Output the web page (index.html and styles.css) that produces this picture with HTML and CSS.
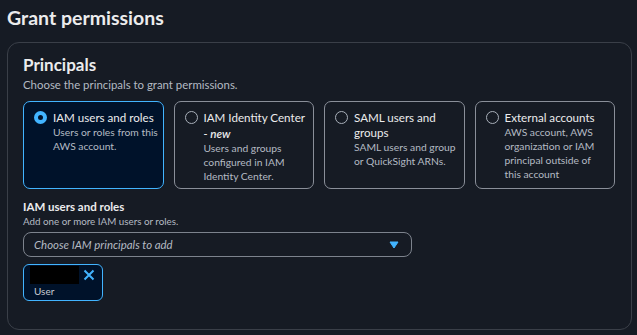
FILE: index.html
```html
<!DOCTYPE html>
<html lang="en">
  <head>
    <meta charset="UTF-8" />
    <meta name="viewport" content="width=device-width, initial-scale=1.0" />
    <title>Grant permissions</title>
    <link rel="stylesheet" href="styles.css">
  </head>
  <body>
    <h1 class="page-title">Grant permissions</h1>
    <div class="container">
      <h2>Principals</h2>
      <p class="hint">Choose the principals to grant permissions.</p>

      <div class="tiles">
        <div class="tile selected">
          <span class="radio"></span>
          <div class="tile-text">
            <div class="tile-title">IAM users and roles</div>
            <div class="tile-desc">Users or roles from this AWS account.</div>
          </div>
        </div>
        <div class="tile">
          <span class="radio"></span>
          <div class="tile-text">
            <div class="tile-title">IAM Identity Center <em>- new</em></div>
            <div class="tile-desc">Users and groups configured in IAM Identity Center.</div>
          </div>
        </div>
        <div class="tile">
          <span class="radio"></span>
          <div class="tile-text">
            <div class="tile-title">SAML users and groups</div>
            <div class="tile-desc">SAML users and group or QuickSight ARNs.</div>
          </div>
        </div>
        <div class="tile">
          <span class="radio"></span>
          <div class="tile-text">
            <div class="tile-title">External accounts</div>
            <div class="tile-desc">AWS account, AWS organization or IAM principal outside of<br />this account</div>
          </div>
        </div>
      </div>

      <div class="field">
        <div class="field-label">IAM users and roles</div>
        <div class="field-desc">Add one or more IAM users or roles.</div>
        <div class="select">
          <span class="placeholder">Choose IAM principals to add</span>
          <svg class="caret" width="10" height="8" viewBox="0 0 10 8">
            <path d="M1 1h8L5 7z" fill="#42b4ff" stroke="#42b4ff" stroke-width="1" stroke-linejoin="round" />
          </svg>
        </div>
        <div class="token">
          <div class="token-top">
            <span class="redacted"></span>
            <svg class="dismiss" width="12" height="12" viewBox="0 0 12 12">
              <path d="M1.5 1.5l9 9M10.5 1.5l-9 9" stroke="#42b4ff" stroke-width="2" />
            </svg>
          </div>
          <div class="token-sub">User</div>
        </div>
      </div>
    </div>
  </body>
</html>
```

FILE: styles.css
```css
/* Reset some default styles */
body,
h1,
h2,
p {
  margin: 0;
  padding: 0;
}

body {
  font-family: Lato, "Open Sans", sans-serif;
  background-color: #161b24;
  color: #e9ebed;
  padding: 6px 5px 5px 7px;
  height: 335px;
  box-sizing: border-box;
}

.page-title {
  font-size: 19.5px;
  font-weight: 700;
  line-height: 24px;
  color: #ececed;
}

.container {
  margin-top: 12px;
  border: 1px solid #3a3f48;
  border-radius: 12px;
  padding: 12px 16px 16px 15px;
  height: 288px;
  box-sizing: border-box;
}

h2 {
  font-size: 17px;
  font-weight: 700;
  line-height: 20px;
  color: #ececed;
}

.hint {
  font-size: 11.4px;
  line-height: 16px;
  margin-top: 2px;
  color: #b4bac3;
}

/* Tiles for choosing principals */
.tiles {
  display: grid;
  grid-template-columns: repeat(4, 1fr);
  gap: 10px;
  margin-top: 8px;
}

.tile {
  display: flex;
  gap: 6px;
  height: 88px;
  box-sizing: border-box;
  padding: 8px 2px 8px 10px;
  border: 1.5px solid #8a8f99;
  border-radius: 7px;
}

.tile.selected {
  border-color: #42b4ff;
  background-color: #00122a;
}

.tile-text {
  flex: 1;
  min-width: 0;
}

.radio {
  flex: none;
  width: 13px;
  height: 13px;
  box-sizing: border-box;
  margin-top: 1px;
  border: 1.5px solid #a9b0ba;
  border-radius: 50%;
}

.tile.selected .radio {
  border: 4px solid #42b4ff;
  background-color: #00122a;
}

.tile-title {
  font-size: 11.6px;
  line-height: 15px;
  color: #ececed;
}

.tile-title em {
  display: block;
  font-weight: 600;
  margin-top: 1px;
}

.tile-desc {
  font-size: 10.3px;
  line-height: 14px;
  color: #b4bac3;
}

/* Principal picker */
.field {
  margin-top: 10px;
}

.field-label {
  font-size: 11.5px;
  font-weight: 700;
  line-height: 16px;
  color: #ececed;
}

.field-desc {
  font-size: 9.8px;
  line-height: 13px;
  color: #b4bac3;
}

.select {
  display: flex;
  align-items: center;
  justify-content: space-between;
  width: 389px;
  height: 25px;
  box-sizing: border-box;
  margin-top: 4px;
  padding: 0 12px 0 10px;
  border: 1.5px solid #7d838d;
  border-radius: 8px;
}

.placeholder {
  font-size: 11.4px;
  font-style: italic;
  color: #b4bac3;
}

.token {
  width: 80px;
  height: 37px;
  box-sizing: border-box;
  margin-top: 7px;
  padding: 1px 7px 0 6px;
  border: 1.5px solid #42b4ff;
  border-radius: 6px;
  background-color: #00122a;
}

.token-top {
  display: flex;
  align-items: center;
  justify-content: space-between;
}

.redacted {
  width: 49px;
  height: 18px;
  background-color: #000;
}

.token-sub {
  font-size: 10px;
  line-height: 14px;
  padding-left: 4px;
  color: #c6cbd2;
}
```
